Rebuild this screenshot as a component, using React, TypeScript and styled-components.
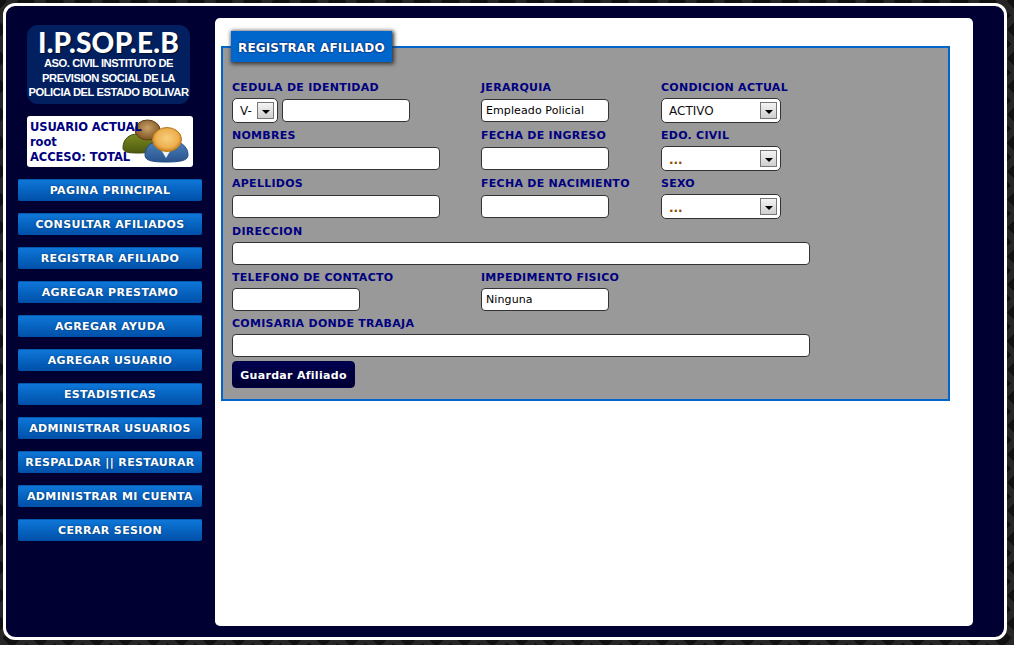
import React from 'react';
import styled, { createGlobalStyle } from 'styled-components';

const Global = createGlobalStyle`
  html, body { margin: 0; padding: 0; height: 100%; overflow: hidden; }
  body {
    background-color: #111;
    background-image:
      repeating-linear-gradient(45deg, #262626 0 7px, #0a0a0a 7px 20px),
      repeating-linear-gradient(-45deg, #262626 0 7px, #0a0a0a 7px 20px);
    background-blend-mode: lighten;
    font-family: "DejaVu Sans", Verdana, sans-serif;
  }
`;

const Page = styled.div`
  box-sizing: border-box;
  width: 1004px;
  height: 637px;
  margin: 3px 0 0 3px;
  background: #000033;
  border: 3px solid #fff;
  border-radius: 12px;
  display: flex;
  padding: 12px 31px 11px 12px;
`;

const Sidebar = styled.aside`
  width: 184px;
  margin-right: 13px;
  display: flex;
  flex-direction: column;
  flex-shrink: 0;
`;

const Logo = styled.div`
  box-sizing: border-box;
  width: 163px;
  height: 79px;
  margin: 7px 0 0 9px;
  background: #02205f;
  border-radius: 11px;
  color: #fff;
  text-align: center;
  font-family: "Liberation Sans", Arial, sans-serif;
  font-weight: 700;
  font-size: 11.2px;
  line-height: 14.5px;
  padding-top: 4px;
  letter-spacing: -0.45px;
  white-space: nowrap;
`;

const LogoTitle = styled.div`
  font-family: "Lato", "Open Sans", sans-serif;
  font-weight: 900;
  font-size: 28px;
  line-height: 27px;
  letter-spacing: 0.3px;
  text-shadow: 1px 1px 1px #0008;
`;

const UserBox = styled.div`
  position: relative;
  box-sizing: border-box;
  width: 166px;
  height: 51px;
  margin: 12px 0 12px 9px;
  padding: 4px 0 0 3px;
  background: #fff;
  border-radius: 3px;
  color: #000080;
  font-weight: 700;
  font-size: 11.5px;
  line-height: 15px;
  white-space: nowrap;
`;

const UserLine = styled.div`
  position: relative;
  letter-spacing: -0.08px;
`;

const UsersIcon = styled.svg`
  position: absolute;
  left: 93px;
  top: 2px;
  width: 70px;
  height: 48px;
`;

const Nav = styled.nav`
  display: flex;
  flex-direction: column;
  gap: 12px;
`;

const NavButton = styled.a`
  display: block;
  height: 22px;
  line-height: 24px;
  border-radius: 2px;
  text-align: center;
  color: #fff;
  font-weight: 700;
  font-size: 11px;
  letter-spacing: 0.36px;
  white-space: nowrap;
  background: linear-gradient(#0f79dc 0, #0a6ccb 30%, #0050a8 100%);
  box-shadow: inset 0 1px 0 #0559ad;
  text-shadow: 0 0 2px #003366;
`;

const Main = styled.main`
  box-sizing: border-box;
  flex: 1;
  background: #fff;
  border-radius: 5px;
  padding: 13px 23px 0 6px;
`;

const Fieldset = styled.fieldset`
  box-sizing: border-box;
  margin: 0;
  width: 729px;
  height: 370px;
  padding: 19px 10px 0 9px;
  border: 2px solid #0066cc;
  background: #999;
  min-inline-size: 0;
`;

const Legend = styled.legend`
  box-sizing: border-box;
  margin-left: -1px;
  padding: 2px 7px 0;
  height: 31px;
  line-height: 31px;
  background: #0066cc;
  color: #fff;
  font-weight: 700;
  font-size: 12px;
  letter-spacing: 0.15px;
  box-shadow: 1px 1px 4px 1px #333;
  text-shadow: 0 0 2px #003;
  font-family: "DejaVu Sans", Verdana, sans-serif;
`;

const Grid = styled.div`
  display: grid;
  grid-template-columns: 249px 180px 1fr;
`;

const Field = styled.div<{ $span?: number; $compact?: boolean }>`
  height: ${p => (p.$compact ? 46 : 48)}px;
  grid-column: span ${p => p.$span ?? 1};
`;

const Label = styled.label<{ $compact?: boolean }>`
  display: block;
  height: ${p => (p.$compact ? 17 : 18)}px;
  line-height: 14px;
  color: #000080;
  font-weight: 700;
  font-size: 11px;
  letter-spacing: 0.27px;
  white-space: nowrap;
`;

const Row = styled.div`
  display: flex;
  gap: 4px;
`;

const Input = styled.input<{ $w: number }>`
  box-sizing: border-box;
  display: block;
  width: ${p => p.$w}px;
  height: 23px;
  margin: 0;
  padding: 0 4px;
  border: 1px solid #333;
  border-radius: 4px;
  background: #fff;
  color: #000;
  font-family: "DejaVu Sans", Verdana, sans-serif;
  font-size: 11px;
  letter-spacing: 0.1px;
  outline: none;
`;

const SelectBox = styled.div<{ $w: number }>`
  box-sizing: border-box;
  width: ${p => p.$w}px;
  height: 25px;
  margin-top: -1px;
  padding: 0 3px 0 7px;
  border: 1px solid #333;
  border-radius: 5px;
  background: #fff;
  display: flex;
  align-items: center;
  justify-content: space-between;
  font-size: 12px;
  color: #111;
`;

const SelectValue = styled.span<{ $muted?: boolean }>`
  color: ${p => (p.$muted ? '#8a4b00' : '#111')};
  font-weight: ${p => (p.$muted ? 700 : 400)};
  margin-top: ${p => (p.$muted ? 2 : 0)}px;
`;

const Arrow = styled.span`
  box-sizing: border-box;
  width: 17px;
  height: 17px;
  border: 1px solid #777;
  background: linear-gradient(#f4f4f4, #cfcfcf);
  display: flex;
  align-items: center;
  justify-content: center;
  &::after {
    content: '';
    margin-top: 2px;
    border-left: 4px solid transparent;
    border-right: 4px solid transparent;
    border-top: 4px solid #000;
  }
`;

const Save = styled.button`
  display: block;
  width: 123px;
  height: 27px;
  margin-top: -2px;
  padding: 1px 0 0;
  border: 1px solid #000040;
  border-radius: 4px;
  background: linear-gradient(#000050, #000033);
  color: #fff;
  font-family: "DejaVu Sans", Verdana, sans-serif;
  font-weight: 700;
  font-size: 11px;
  letter-spacing: 0.3px;
`;

const Select = ({ w, value, muted }: { w: number; value: string; muted?: boolean }) => (
  <SelectBox $w={w}>
    <SelectValue $muted={muted}>{value}</SelectValue>
    <Arrow />
  </SelectBox>
);

const nav = [
  'PAGINA PRINCIPAL', 'CONSULTAR AFILIADOS', 'REGISTRAR AFILIADO', 'AGREGAR PRESTAMO',
  'AGREGAR AYUDA', 'AGREGAR USUARIO', 'ESTADISTICAS', 'ADMINISTRAR USUARIOS',
  'RESPALDAR || RESTAURAR', 'ADMINISTRAR MI CUENTA', 'CERRAR SESION',
];

export default function App() {
  return (
    <>
      <Global />
      <Page>
        <Sidebar>
          <Logo>
            <LogoTitle>I.P.SOP.E.B</LogoTitle>
            <div>ASO. CIVIL INSTITUTO DE</div>
            <div>PREVISION SOCIAL DE LA</div>
            <div>POLICIA DEL ESTADO BOLIVAR</div>
          </Logo>
          <UserBox>
            <UsersIcon viewBox="0 0 70 48">
              <defs>
                <radialGradient id="headA" cx="50%" cy="40%" r="60%">
                  <stop offset="0" stopColor="#c9a066" />
                  <stop offset="1" stopColor="#7a5220" />
                </radialGradient>
                <radialGradient id="headB" cx="50%" cy="45%" r="55%">
                  <stop offset="0" stopColor="#f7cf7e" />
                  <stop offset="0.7" stopColor="#eeb050" />
                  <stop offset="1" stopColor="#c9801c" />
                </radialGradient>
                <linearGradient id="bodyA" x1="0" y1="0" x2="0" y2="1">
                  <stop offset="0" stopColor="#7d8a20" />
                  <stop offset="1" stopColor="#4c5a10" />
                </linearGradient>
                <linearGradient id="bodyB" x1="0" y1="0" x2="0" y2="1">
                  <stop offset="0" stopColor="#4f83bd" />
                  <stop offset="1" stopColor="#28548e" />
                </linearGradient>
              </defs>
              <path d="M3 30c0-9 6-14 15-14s16 5 16 14c0 4-6 5-16 5S3 34 3 30z" fill="url(#bodyA)" stroke="#3f4a10" />
              <ellipse cx="27.5" cy="12" rx="12.5" ry="10" fill="url(#headA)" stroke="#5c3d16" />
              <path d="M25 37c0-9 7-15 21-15s22 6 22 15c0 6-9 7-22 7s-21-1-21-7z" fill="url(#bodyB)" stroke="#234a80" />
              <path d="M40 30l6 10 6-10z" fill="#eef2f6" />
              <ellipse cx="47" cy="21.5" rx="14.5" ry="12" fill="url(#headB)" stroke="#b97a1c" />
            </UsersIcon>
            <UserLine>USUARIO ACTUAL</UserLine>
            <UserLine>root</UserLine>
            <UserLine>ACCESO: TOTAL</UserLine>
          </UserBox>
          <Nav>
            {nav.map(n => <NavButton key={n}>{n}</NavButton>)}
          </Nav>
        </Sidebar>
        <Main>
          <Fieldset>
            <Legend>REGISTRAR AFILIADO</Legend>
            <Grid>
              <Field>
                <Label>CEDULA DE IDENTIDAD</Label>
                <Row>
                  <Select w={46} value="V-" />
                  <Input $w={128} />
                </Row>
              </Field>
              <Field>
                <Label>JERARQUIA</Label>
                <Input $w={128} defaultValue="Empleado Policial" />
              </Field>
              <Field>
                <Label>CONDICION ACTUAL</Label>
                <Select w={120} value="ACTIVO" />
              </Field>
              <Field>
                <Label>NOMBRES</Label>
                <Input $w={208} />
              </Field>
              <Field>
                <Label>FECHA DE INGRESO</Label>
                <Input $w={128} />
              </Field>
              <Field>
                <Label>EDO. CIVIL</Label>
                <Select w={120} value="..." muted />
              </Field>
              <Field>
                <Label>APELLIDOS</Label>
                <Input $w={208} />
              </Field>
              <Field>
                <Label>FECHA DE NACIMIENTO</Label>
                <Input $w={128} />
              </Field>
              <Field>
                <Label>SEXO</Label>
                <Select w={120} value="..." muted />
              </Field>
              <Field $span={3} $compact>
                <Label $compact>DIRECCION</Label>
                <Input $w={578} />
              </Field>
              <Field $compact>
                <Label $compact>TELEFONO DE CONTACTO</Label>
                <Input $w={128} />
              </Field>
              <Field $span={2} $compact>
                <Label $compact>IMPEDIMENTO FISICO</Label>
                <Input $w={128} defaultValue="Ninguna" />
              </Field>
              <Field $span={3} $compact>
                <Label $compact>COMISARIA DONDE TRABAJA</Label>
                <Input $w={578} />
              </Field>
            </Grid>
            <Save>Guardar Afiliado</Save>
          </Fieldset>
        </Main>
      </Page>
    </>
  );
}
